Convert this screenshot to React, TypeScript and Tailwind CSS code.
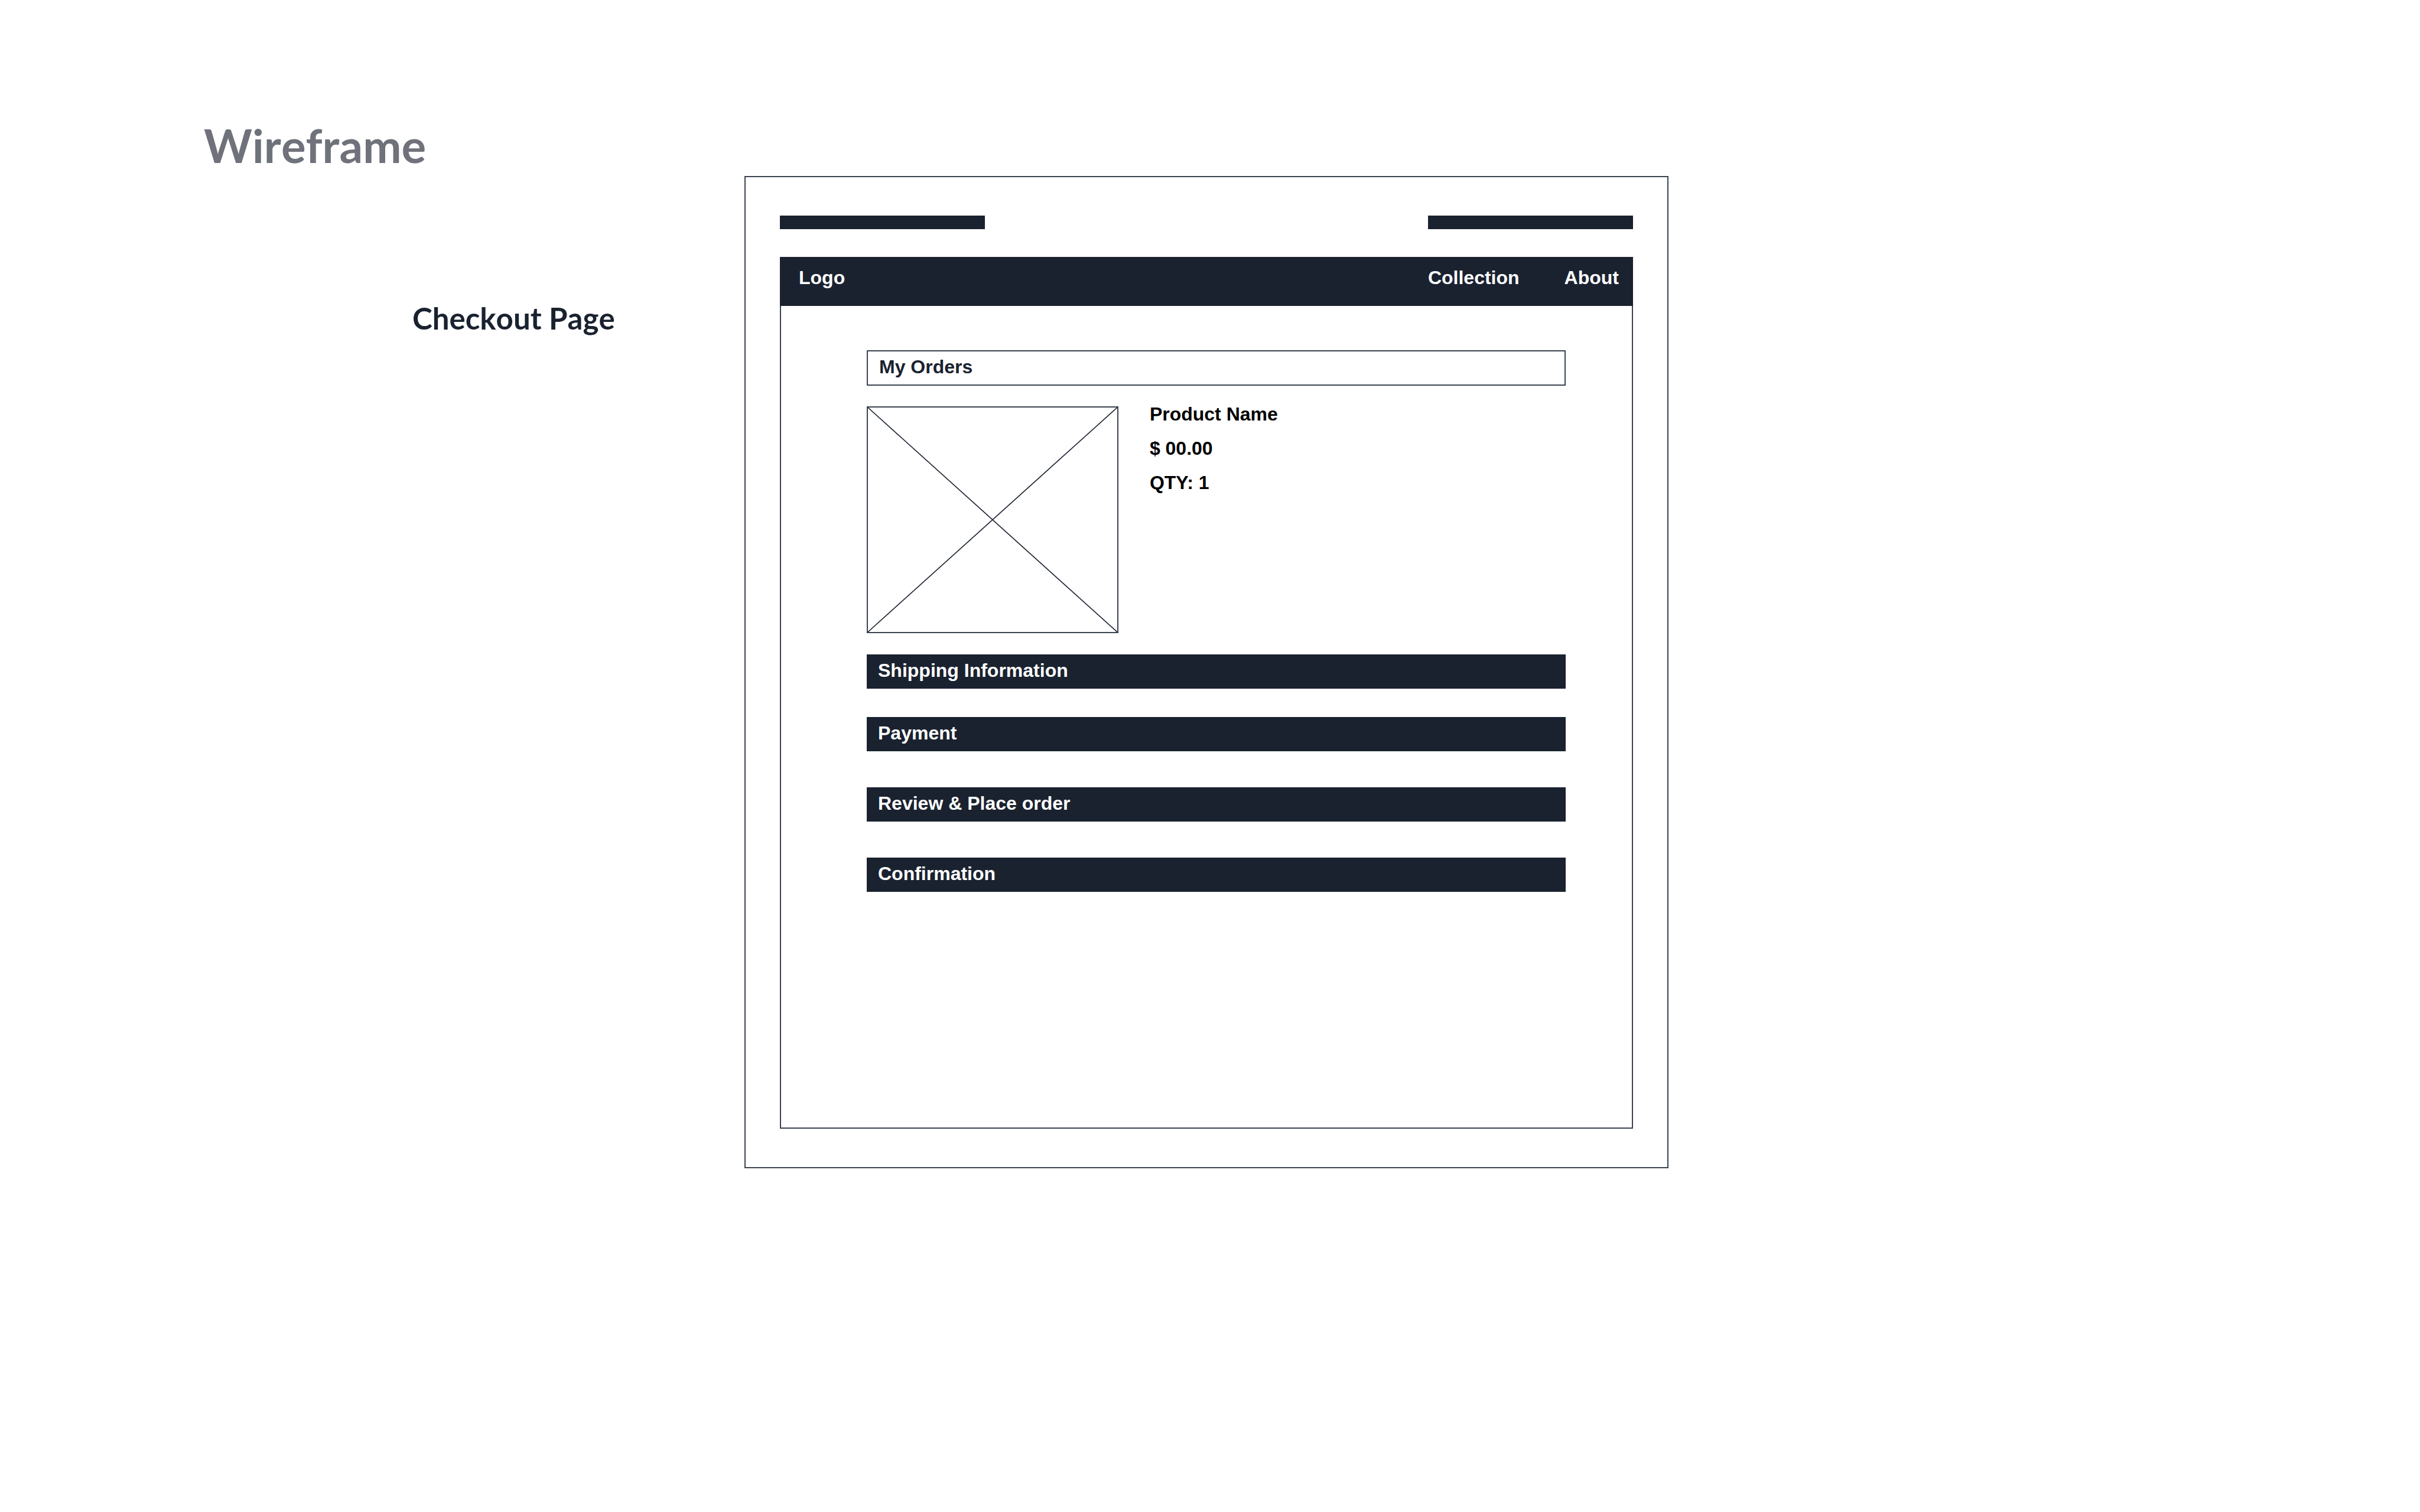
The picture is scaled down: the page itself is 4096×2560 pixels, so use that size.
const steps = [
  { label: 'Shipping Information', spacing: 'mt-9' },
  { label: 'Payment', spacing: 'mt-12' },
  { label: 'Review & Place order', spacing: 'mt-[61px]' },
  { label: 'Confirmation', spacing: 'mt-[61px]' },
];

function TopBars() {
  return (
    <div className="flex justify-between">
      <div className="h-[23px] w-[24%] bg-[#1a2230]" />
      <div className="h-[23px] w-[24%] bg-[#1a2230]" />
    </div>
  );
}

function SiteHeader() {
  return (
    <header className="mt-[47px] flex h-[83px] items-center justify-between bg-[#1a2230] pr-6 pb-[13px] pl-8 text-white">
      <a href="#home">Logo</a>
      <nav className="flex gap-[76px]">
        <a href="#collection">Collection</a>
        <a href="#about">About</a>
      </nav>
    </header>
  );
}

function ImagePlaceholder() {
  return (
    <svg
      className="h-[384px] w-[36%] shrink-0 border-2 border-[#3b4350]"
      viewBox="0 0 100 100"
      preserveAspectRatio="none"
      role="img"
      aria-label="Product image"
    >
      <path
        d="M0 0L100 100M100 0L0 100"
        fill="none"
        stroke="#1a2230"
        strokeWidth="1.6"
        vectorEffect="non-scaling-stroke"
      />
    </svg>
  );
}

function OrderItem() {
  return (
    <article className="mt-[35px] flex items-start gap-[53px]">
      <ImagePlaceholder />
      <div className="flex flex-col gap-8 leading-[26px] text-black">
        <h3>Product Name</h3>
        <p>$ 00.00</p>
        <p>QTY: 1</p>
      </div>
    </article>
  );
}

function CheckoutFrame() {
  return (
    <section className="mt-[298px] mb-12 self-start border-2 border-[#3b4350] px-[58px] py-[65px] font-['Liberation_Sans',Arial,sans-serif] text-[32px] leading-9 font-bold text-[#1a2230]">
      <TopBars />
      <SiteHeader />
      <div className="border-x-2 border-b-2 border-[#3b4350] pt-[75px] pr-28 pb-[399px] pl-[145px]">
        <h2 className="flex h-[60px] items-center border-2 border-[#3b4350] pb-1 pl-[19px]">My Orders</h2>
        <OrderItem />
        {steps.map((step) => (
          <button
            key={step.label}
            type="button"
            className={`flex h-[58px] w-full items-center bg-[#1a2230] pb-1 pl-[19px] text-left text-white ${step.spacing}`}
          >
            {step.label}
          </button>
        ))}
      </div>
    </section>
  );
}

export default function App() {
  return (
    <main className="grid min-h-screen grid-cols-[1260fr_1564fr_1272fr] bg-white">
      <div className="pt-[200px] pl-[345px] font-['Lato',sans-serif] font-bold [font-kerning:none]">
        <h1 className="text-[78px] leading-[92px] text-[#6f727a]">Wireframe</h1>
        <p className="mt-[217px] pl-[353px] text-[51px] leading-[60px] whitespace-nowrap text-[#1a2230]">Checkout Page</p>
      </div>
      <CheckoutFrame />
    </main>
  );
}
